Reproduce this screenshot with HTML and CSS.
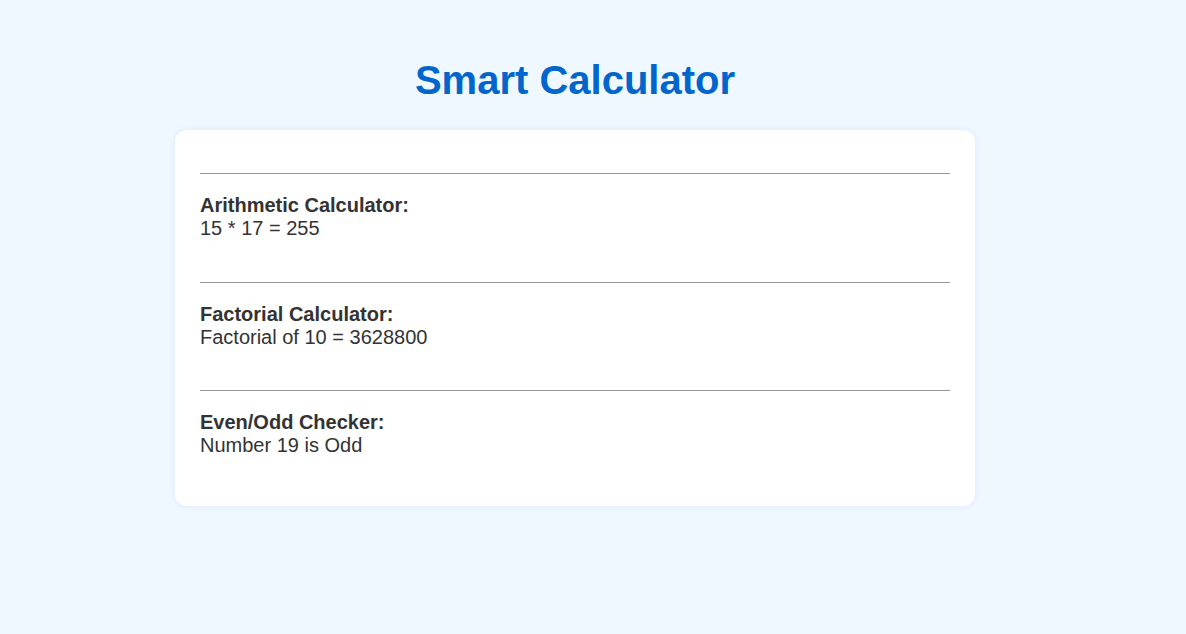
FILE: index.html
```html
<!DOCTYPE html>
<html lang="en">
<head>
<meta charset="utf-8">
<title>Smart Calculator</title>
<link rel="stylesheet" href="styles.css">
</head>
<body>
<h1 class="title">Smart Calculator</h1>
<div class="card">
  <div class="section">
    <hr class="rule">
    <p class="result"><strong>Arithmetic Calculator:</strong><br>15 * 17 = 255</p>
  </div>
  <div class="section">
    <hr class="rule">
    <p class="result"><strong>Factorial Calculator:</strong><br>Factorial of 10 = 3628800</p>
  </div>
  <div class="section">
    <hr class="rule">
    <p class="result"><strong>Even/Odd Checker:</strong><br>Number 19 is Odd</p>
  </div>
</div>
</body>
</html>
```
FILE: styles.css
```css
html, body {
  margin: 0;
  padding: 0;
}
body {
  background: #f0f8ff;
  font-family: "Liberation Sans", Arial, sans-serif;
  color: #333;
  padding: 20px 56px 20px 20px;
}
.title {
  text-align: center;
  color: #0066cc;
  font-size: 40px;
  font-weight: bold;
  margin: 36px 0 26px;
  line-height: 48px;
}
.card {
  width: 800px;
  box-sizing: border-box;
  margin: 0 auto;
  background: #fff;
  border-radius: 12px;
  padding: 25px;
  box-shadow: 0 0 10px rgba(0, 80, 200, 0.08);
}
.section {
  padding: 18px 0 23.5px;
}
.rule {
  border: 0;
  border-top: 1px solid #999;
  margin: 0 0 20px;
}
.result {
  margin: 0;
  font-size: 20px;
  line-height: 23px;
}
```
